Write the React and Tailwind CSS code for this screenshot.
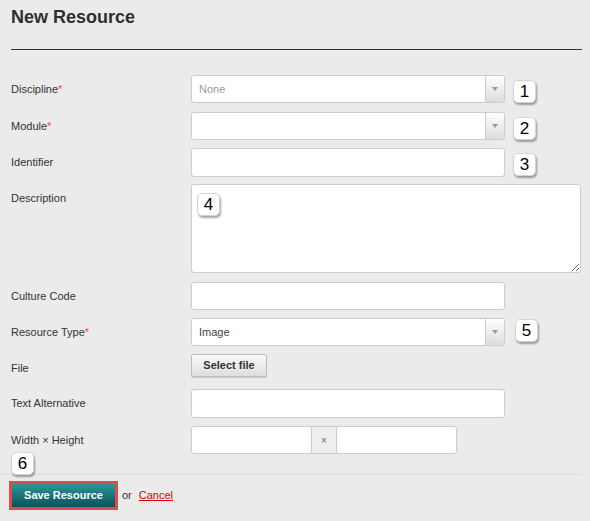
import React from 'react';

const Badge = ({ n, className = '' }) => (
  <span
    className={`flex h-[23px] w-[23px] items-center justify-center rounded-[5px] border border-[#d4d4d4] bg-white text-[17px] leading-none text-black shadow-[1px_2px_2px_rgba(0,0,0,0.35)] ${className}`}
  >
    {n}
  </span>
);

const Label = ({ text, required }) => (
  <div className="w-[180px] shrink-0 pt-[7px] text-[11px] leading-[14px] text-[#333]">
    {text}
    {required && <span className="text-[#e8485a]">*</span>}
  </div>
);

const Select = ({ value, placeholder }) => (
  <div className="flex h-[28px] w-[314px] overflow-hidden rounded-[3px] border border-[#cccccc] bg-white">
    <div className={`flex flex-1 items-center pl-[7px] text-[11px] leading-[14px] ${placeholder ? 'text-[#999]' : 'text-[#444]'}`}>
      {value}
    </div>
    <div className="flex w-[19px] items-center justify-center border-l border-[#cccccc] bg-gradient-to-b from-white to-[#dcdcdc]">
      <span className="h-0 w-0 border-x-[3px] border-t-[4px] border-x-transparent border-t-[#999]" />
    </div>
  </div>
);

const Input = ({ className = 'w-[314px] h-[28px]' }) => (
  <div className={`rounded-[3px] border border-[#cccccc] bg-white ${className}`} />
);

export default function App() {
  return (
    <div className="min-h-[521px] bg-[#ebebeb] font-['Liberation_Sans',Arial,sans-serif] text-[#333]">
      <div className="pl-[11px] pr-[8px] pt-[6px]">
        <h1 className="text-[18px] font-bold leading-[22px] text-[#2f2f2f]">New Resource</h1>
        <div className="mt-[21px] h-[1px] bg-[#333]" />

        <div className="mt-[25px] flex">
          <Label text="Discipline" required />
          <Select value="None" placeholder />
          <Badge n="1" className="ml-[8px] mt-[5px]" />
        </div>

        <div className="mt-[9px] flex">
          <Label text="Module" required />
          <Select value="" />
          <Badge n="2" className="ml-[8px] mt-[5px]" />
        </div>

        <div className="mt-[8px] flex">
          <Label text="Identifier" />
          <Input className="h-[29px] w-[314px]" />
          <Badge n="3" className="ml-[8px] mt-[5px]" />
        </div>

        <div className="mt-[7px] flex">
          <Label text="Description" />
          <div className="relative">
            <textarea className="block h-[89px] w-[390px] rounded-[3px] border border-[#cccccc] bg-white outline-none" />
            <Badge n="4" className="absolute left-[6px] top-[9px]" />
          </div>
        </div>

        <div className="mt-[9px] flex">
          <Label text="Culture Code" />
          <Input />
        </div>

        <div className="mt-[8px] flex">
          <Label text="Resource Type" required />
          <Select value="Image" />
          <Badge n="5" className="ml-[10px] mt-[1px]" />
        </div>

        <div className="mt-[8px] flex">
          <Label text="File" />
          <button className="h-[23px] w-[76px] rounded-[2px] border border-[#bdbdbd] bg-gradient-to-b from-[#fafafa] to-[#dedede] text-[11px] font-bold text-[#333] shadow-[0_1px_1px_rgba(0,0,0,0.15)]">
            Select file
          </button>
        </div>

        <div className="mt-[12px] flex">
          <Label text="Text Alternative" />
          <Input className="h-[29px] w-[314px]" />
        </div>

        <div className="mt-[8px] flex">
          <Label text="Width × Height" />
          <div className="flex h-[28px] w-[266px] overflow-hidden rounded-[3px] border border-[#cccccc] bg-white">
            <div className="w-[119px]" />
            <div className="flex w-[26px] items-center justify-center border-x border-[#cccccc] bg-[#eeeeee] text-[10px] text-[#667]">
              ×
            </div>
            <div className="flex-1" />
          </div>
        </div>
      </div>

      <div className="relative mt-[20px] mr-[8px] h-[1px] bg-[#dcdcdc]">
        <Badge n="6" className="absolute -top-[22px] left-[11px]" />
      </div>

      <div className="flex items-center pl-[9px] pt-[6px]">
        <div className="border-[3px] border-[#e2474b]">
          <button className="block h-[23px] w-[103px] bg-gradient-to-b from-[#2b9797] to-[#0a525a] text-[11px] font-bold text-white">
            Save Resource
          </button>
        </div>
        <span className="ml-[4px] text-[11px] text-[#333]">or</span>
        <a href="#" className="ml-[7px] text-[11px] text-[#e00000] underline">Cancel</a>
      </div>
    </div>
  );
}
